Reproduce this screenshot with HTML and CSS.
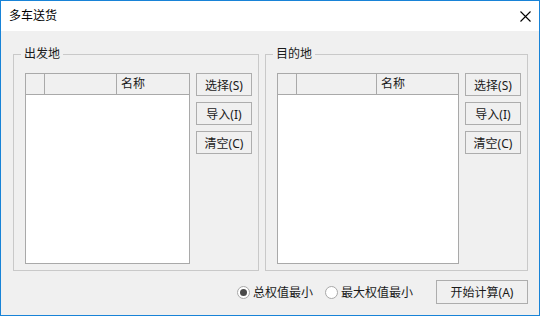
FILE: index.html
```html
<!DOCTYPE html>
<html lang="zh-CN">
<head>
    <meta charset="UTF-8">
    <meta name="viewport" content="width=device-width, initial-scale=1.0">
    <title>多车送货</title>
    <link rel="stylesheet" href="styles.css">
</head>
<body>
    <div class="window">
        <!-- Title bar -->
        <div class="titlebar">
            <span class="title">多车送货</span>
            <button class="close-btn" title="关闭">
                <svg width="11" height="11" viewBox="0 0 11 11">
                    <path d="M0.5 0.5 L10.5 10.5 M10.5 0.5 L0.5 10.5" stroke="#000" stroke-width="1.1" fill="none"/>
                </svg>
            </button>
        </div>

        <div class="client">
            <div class="groups">
                <!-- Start points -->
                <div class="group group-from">
                    <span class="group-title">出发地</span>
                    <div class="listview">
                        <div class="lv-header">
                            <div class="col col-check"></div>
                            <div class="col col-id"></div>
                            <div class="col col-name">名称</div>
                        </div>
                        <div class="lv-body"></div>
                    </div>
                    <div class="btn-col">
                        <button class="btn">选择(S)</button>
                        <button class="btn">导入(I)</button>
                        <button class="btn">清空(C)</button>
                    </div>
                </div>

                <!-- Destinations -->
                <div class="group group-to">
                    <span class="group-title">目的地</span>
                    <div class="listview">
                        <div class="lv-header">
                            <div class="col col-check"></div>
                            <div class="col col-id"></div>
                            <div class="col col-name">名称</div>
                        </div>
                        <div class="lv-body"></div>
                    </div>
                    <div class="btn-col">
                        <button class="btn">选择(S)</button>
                        <button class="btn">导入(I)</button>
                        <button class="btn">清空(C)</button>
                    </div>
                </div>
            </div>

            <div class="footer">
                <label class="radio radio-total">
                    <input type="radio" name="mode" checked>
                    <span>总权值最小</span>
                </label>
                <label class="radio radio-max">
                    <input type="radio" name="mode">
                    <span>最大权值最小</span>
                </label>
                <button class="btn btn-run">开始计算(A)</button>
            </div>
        </div>
    </div>
</body>
</html>
```

FILE: styles.css
```css
* {
    margin: 0;
    padding: 0;
    box-sizing: border-box;
    font-family: 'Noto Sans', 'Noto Sans CJK SC', sans-serif;
}

body {
    background-color: #ffffff;
}

.window {
    width: 540px;
    height: 316px;
    border: 1px solid #1883d7;
    display: flex;
    flex-direction: column;
    background-color: #f0f0f0;
}

/* Title bar */
.titlebar {
    height: 30px;
    background-color: #ffffff;
    display: flex;
    align-items: center;
    justify-content: space-between;
    padding-left: 8px;
    padding-right: 8px;
}

.title {
    font-size: 12px;
    line-height: 16px;
    color: #000;
}

.close-btn {
    width: 11px;
    height: 11px;
    border: none;
    background: transparent;
    display: flex;
}

/* Client area */
.client {
    flex: 1;
    padding: 23px 11px 0 12px;
}

.groups {
    display: flex;
    gap: 6px;
}

.group {
    position: relative;
    height: 217px;
    border: 1px solid #c9c9c9;
    display: flex;
    gap: 6px;
    padding: 18px 6px 6px 11px;
}

.group-from {
    width: 246px;
}

.group-to {
    width: 263px;
}

.group-title {
    position: absolute;
    top: -9px;
    left: 7px;
    padding: 0 3px;
    background-color: #f0f0f0;
    font-size: 12px;
    line-height: 16px;
    color: #1a1a1a;
}

/* List view */
.listview {
    flex: 1;
    border: 1px solid #a9a9a9;
    background-color: #ffffff;
    display: flex;
    flex-direction: column;
}

.lv-header {
    height: 21px;
    display: flex;
    background-color: #f0f0f0;
    border-bottom: 1px solid #a9a9a9;
}

.col {
    border-right: 1px solid #a9a9a9;
    font-size: 12px;
    line-height: 20px;
    color: #1a1a1a;
}

.col-check {
    width: 19px;
}

.group-from .col-id {
    width: 72px;
}

.group-to .col-id {
    width: 80px;
}

.col-name {
    flex: 1;
    border-right: none;
    padding-left: 4px;
}

.lv-body {
    flex: 1;
}

/* Buttons */
.btn-col {
    width: 56px;
    display: flex;
    flex-direction: column;
    gap: 6px;
}

.btn {
    height: 23px;
    background-color: #f0f0f0;
    border: 1px solid #adadad;
    font-size: 12px;
    color: #1a1a1a;
    cursor: pointer;
}

.btn:hover {
    background-color: #e5f1fb;
    border-color: #0078d7;
}

/* Footer */
.footer {
    margin-top: 9px;
    display: flex;
    justify-content: flex-end;
    align-items: center;
}

.radio {
    display: flex;
    align-items: center;
    gap: 3px;
    font-size: 12px;
    color: #1a1a1a;
}

.radio-total {
    margin-right: 12px;
}

.radio-max {
    margin-right: 23px;
}

.radio input {
    appearance: none;
    width: 13px;
    height: 13px;
    border: 1px solid #a8a8a8;
    border-radius: 50%;
    background-color: #ffffff;
    display: grid;
    place-content: center;
}

.radio input:checked::before {
    content: "";
    width: 7px;
    height: 7px;
    border-radius: 50%;
    background-color: #4a4a4a;
}

.btn-run {
    width: 92px;
    height: 24px;
}
```
